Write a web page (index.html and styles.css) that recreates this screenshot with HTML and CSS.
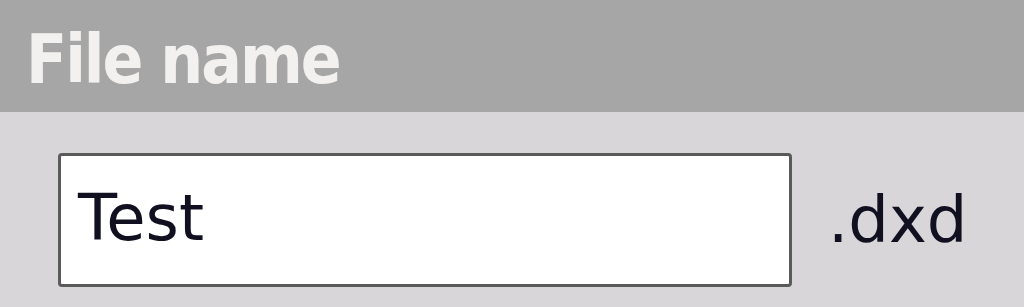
FILE: index.html
```html
<!DOCTYPE html>
<html>
<head>
<meta charset="utf-8">
<link rel="stylesheet" href="styles.css">
</head>
<body>
<div class="panel">
  <div class="header">File name</div>
  <div class="row">
    <div class="field">Test</div>
    <span class="ext">.dxd</span>
  </div>
</div>
</body>
</html>
```
FILE: styles.css
```css
html, body {
  margin: 0;
  padding: 0;
  background: #d8d6d9;
}
.panel {
  width: 1024px;
  height: 307px;
  background: #d8d6d9;
  overflow: hidden;
}
.header {
  height: 112px;
  background: #a6a6a6;
  box-sizing: border-box;
  padding-left: 26px;
  padding-top: 20px;
  font-family: "DejaVu Sans Condensed", "DejaVu Sans", sans-serif;
  font-weight: bold;
  font-stretch: condensed;
  font-size: 67px;
  line-height: 80px;
  letter-spacing: -2px;
  color: #f3f1ef;
}
.row {
  display: flex;
  align-items: center;
  padding-top: 41px;
  padding-left: 58px;
  font-family: "DejaVu Sans", sans-serif;
  font-size: 64px;
  color: #101020;
}
.field {
  width: 734px;
  height: 134px;
  box-sizing: border-box;
  border: 3px solid #5a5a5a;
  border-radius: 4px;
  background: #ffffff;
  padding-left: 17px;
  line-height: 124px;
}
.ext {
  margin-left: 36px;
}
```
